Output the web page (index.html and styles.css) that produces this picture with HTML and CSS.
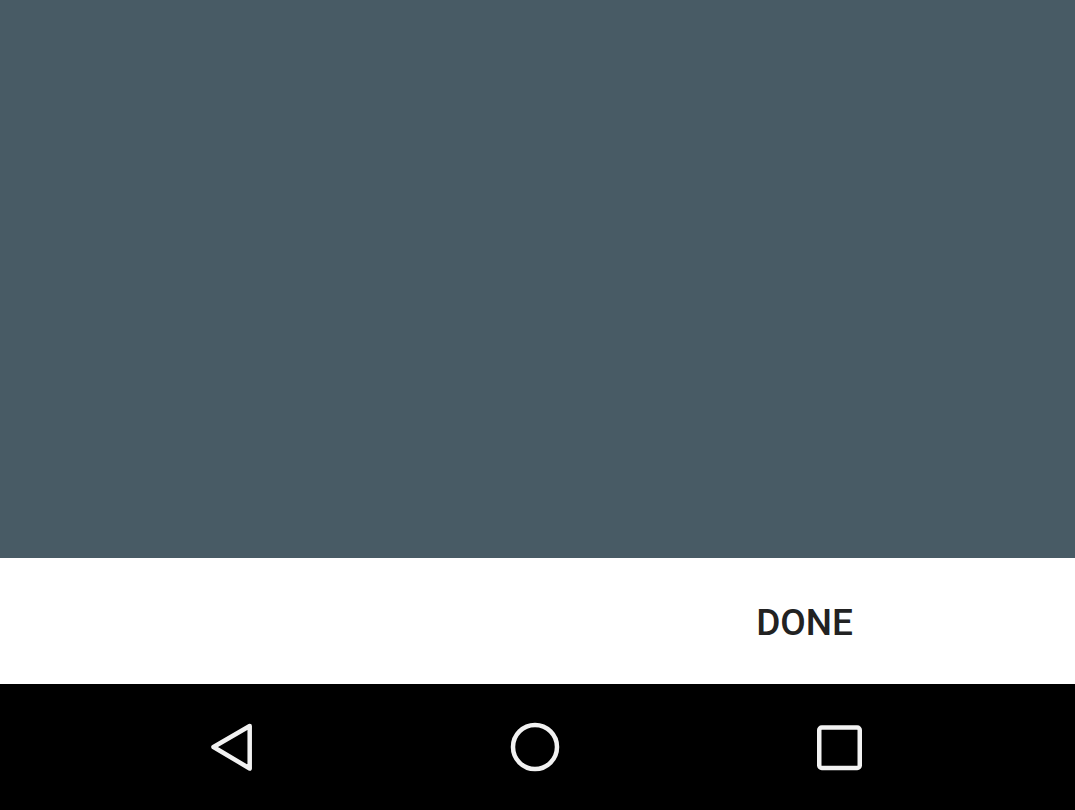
FILE: index.html
```html
<!DOCTYPE html>
<html>
<head>
<meta charset="utf-8">
<link rel="stylesheet" href="styles.css">
</head>
<body>
<div class="screen">
  <div class="content"></div>
  <div class="actions">
    <span class="done">DONE</span>
  </div>
  <nav class="navbar">
    <svg class="nav-icon back" width="60" height="60" viewBox="0 0 60 60">
      <path d="M48.7 9 L12.5 30 L48.7 51.5 Z" fill="none" stroke="#f2f2f2" stroke-width="4.5" stroke-linejoin="round"/>
    </svg>
    <svg class="nav-icon home" width="60" height="60" viewBox="0 0 60 60">
      <circle cx="30" cy="30" r="22" fill="none" stroke="#f2f2f2" stroke-width="4.5"/>
    </svg>
    <svg class="nav-icon recents" width="60" height="60" viewBox="0 0 60 60">
      <rect x="10.25" y="10.5" width="40.5" height="40.5" rx="2.5" fill="none" stroke="#f2f2f2" stroke-width="4.5"/>
    </svg>
  </nav>
</div>
</body>
</html>
```

FILE: styles.css
```css
html, body {
  margin: 0;
  padding: 0;
  background: #000;
}
.screen {
  width: 1075px;
  height: 810px;
  display: flex;
  flex-direction: column;
}
.content {
  height: 558px;
  background: #485b65;
}
.actions {
  height: 126px;
  background: #ffffff;
  display: flex;
  align-items: center;
  justify-content: flex-end;
  padding-right: 222px;
}
.done {
  font-family: Roboto, "Liberation Sans", sans-serif;
  font-weight: 500;
  font-size: 37px;
  color: #222222;
  letter-spacing: 0;
  line-height: 1;
  margin-top: 2px;
}
.navbar {
  height: 126px;
  background: #000;
  display: flex;
  align-items: center;
  justify-content: center;
  gap: 244px;
  padding-right: 5px;
}
.nav-icon {
  display: block;
  flex: none;
}
```
